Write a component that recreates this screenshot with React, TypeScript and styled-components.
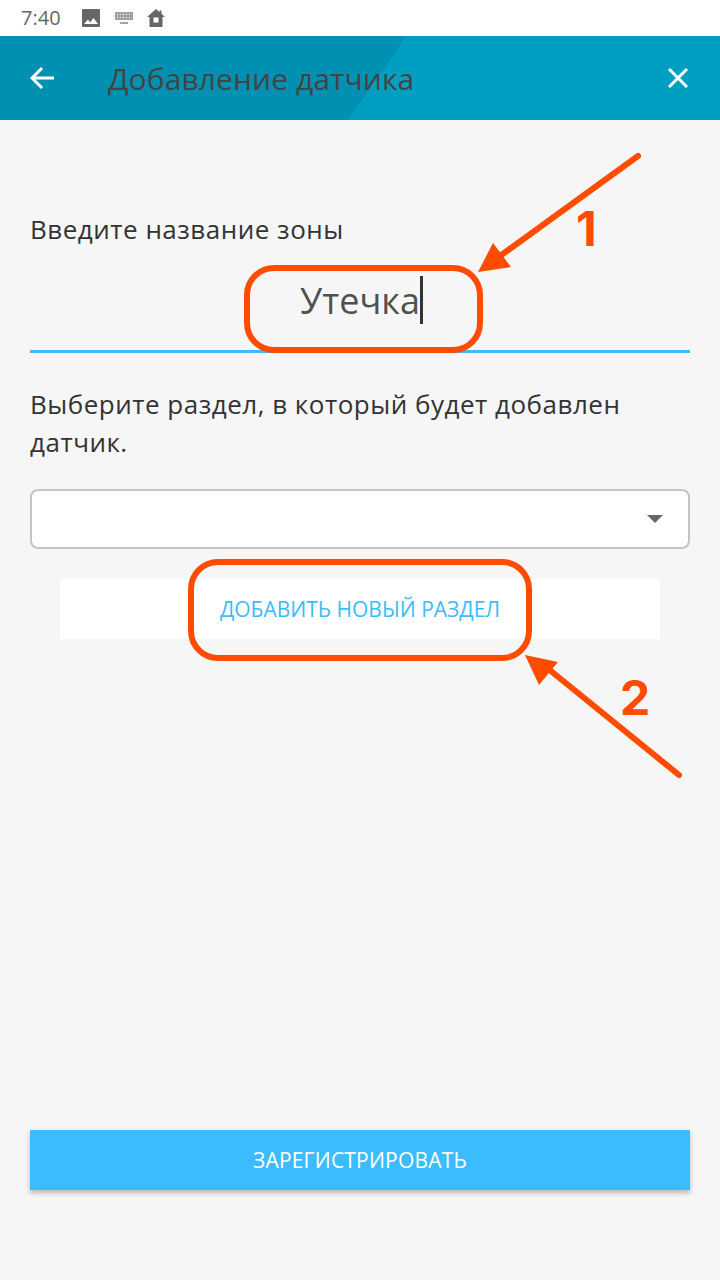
import * as React from "react";
import styled, { createGlobalStyle } from "styled-components";

const GlobalStyle = createGlobalStyle`
  html, body {
    margin: 0;
    padding: 0;
    background: #f6f6f6;
    font-family: "Open Sans", "Noto Sans", sans-serif;
  }
  * { box-sizing: border-box; }
`;

const Accent = "#3bbcff";
const Marker = "#ff4c00";

const Screen = styled.div`
  position: relative;
  width: 720px;
  height: 1280px;
  display: flex;
  flex-direction: column;
  overflow: hidden;
  background: #f6f6f6;
`;

const StatusBar = styled.div`
  height: 36px;
  background: #fff;
  display: flex;
  align-items: center;
  padding-left: 21px;
  color: #666;
`;

const Clock = styled.span`
  font-size: 20px;
  line-height: 36px;
  width: 60px;
`;

const StatusIcon = styled.svg`
  display: block;
  margin-right: 13px;
  fill: #666;
`;

const Header = styled.header`
  height: 84px;
  background: linear-gradient(124.6deg, #0091b2 0, #0091b2 334px, #009fc2 335px);
  display: flex;
  align-items: center;
  padding: 0 32px 0 30px;
`;

const HeaderIcon = styled.svg`
  display: block;
  stroke: #fff;
  stroke-width: 3;
  fill: none;
`;

const Title = styled.h1`
  flex: 1;
  margin: 0 0 0 54px;
  font-size: 30px;
  font-weight: 400;
  letter-spacing: 0.1px;
  color: #444;
  white-space: nowrap;
`;

const Content = styled.main`
  flex: 1;
  padding: 90px 30px 90px;
  display: flex;
  flex-direction: column;
`;

const Label = styled.p`
  margin: 0;
  font-size: 26px;
  line-height: 38px;
  letter-spacing: 0.5px;
  color: #333;
`;

const Field = styled.div`
  height: 87px;
  margin-top: 18px;
  padding-left: 3px;
  border-bottom: 3px solid ${Accent};
  display: flex;
  justify-content: center;
  font-size: 36px;
  line-height: 70px;
  color: #505050;
`;

const Caret = styled.span`
  width: 3px;
  height: 48px;
  margin-top: 10px;
  background: #333;
`;

const SectionLabel = styled(Label)`
  margin-top: 32px;
`;

const Select = styled.div`
  height: 60px;
  margin-top: 28px;
  background: #fff;
  border: 2px solid #c4c4c4;
  border-radius: 8px;
  display: flex;
  align-items: center;
  justify-content: flex-end;
  padding-right: 25px;
`;

const SelectArrow = styled.span`
  width: 0;
  height: 0;
  border-left: 8px solid transparent;
  border-right: 8px solid transparent;
  border-top: 8px solid #666;
`;

const AddButton = styled.div`
  height: 60px;
  margin: 30px 30px 0;
  background: #fff;
  color: ${Accent};
  font-size: 21px;
  display: flex;
  align-items: center;
  justify-content: center;
`;

const SubmitButton = styled.div`
  height: 60px;
  margin-top: auto;
  background: ${Accent};
  color: #fff;
  font-size: 21px;
  letter-spacing: 0.2px;
  display: flex;
  align-items: center;
  justify-content: center;
  box-shadow: 0 3px 5px rgba(0, 0, 0, 0.25);
`;

const Callout = styled.div<{ $x: number; $y: number; $w: number; $h: number }>`
  position: absolute;
  left: ${(p) => p.$x}px;
  top: ${(p) => p.$y}px;
  width: ${(p) => p.$w}px;
  height: ${(p) => p.$h}px;
  border: 6px solid ${Marker};
  border-radius: 30px;
`;

const Arrows = styled.svg`
  position: absolute;
  left: 0;
  top: 0;
`;

const StepNumber = styled.span<{ $x: number; $y: number }>`
  position: absolute;
  left: ${(p) => p.$x}px;
  top: ${(p) => p.$y}px;
  font-family: Inter, "Open Sans", sans-serif;
  font-weight: 700;
  font-size: 48px;
  line-height: 50px;
  color: ${Marker};
`;

export default function App() {
  return (
    <Screen>
      <GlobalStyle />
      <StatusBar>
        <Clock>7:40</Clock>
        <StatusIcon width="20" height="20" viewBox="0 0 20 20">
          <path d="M2 1h16a1 1 0 0 1 1 1v16a1 1 0 0 1-1 1H2a1 1 0 0 1-1-1V2a1 1 0 0 1 1-1zm1 15h14l-4.500-6-3.500 4.500L7 11.500z" fillRule="evenodd" />
        </StatusIcon>
        <StatusIcon width="20" height="14" viewBox="0 0 20 14" style={{ opacity: 0.6 }}>
          <path d="M1 1h18v8H1zM6 11h8v2H6z" />
          <path d="M3 3h1v1H3zM6 3h1v1H6zM9 3h1v1H9zM12 3h1v1h-1zM15 3h1v1h-1zM3 6h1v1H3zM6 6h1v1H6zM9 6h1v1H9zM12 6h1v1h-1zM15 6h1v1h-1z" fill="#fff" />
        </StatusIcon>
        <StatusIcon width="18" height="18" viewBox="0 0 18 18">
          <path d="M9 0l3.500 3V1.500h2v3.300L18 8h-2.500v10h-13V8H0zM6.500 8.500v5h5v-5z" fillRule="evenodd" />
        </StatusIcon>
      </StatusBar>
      <Header>
        <HeaderIcon width="24" height="24" viewBox="0 0 24 24">
          <path d="M24 12H2M12 2L2 12l10 10" />
        </HeaderIcon>
        <Title>Добавление датчика</Title>
        <HeaderIcon width="20" height="20" viewBox="0 0 20 20">
          <path d="M1 1l18 18M19 1L1 19" />
        </HeaderIcon>
      </Header>
      <Content>
        <Label>Введите название зоны</Label>
        <Field>
          Утечка
          <Caret />
        </Field>
        <SectionLabel>Выберите раздел, в который будет добавлен датчик.</SectionLabel>
        <Select>
          <SelectArrow />
        </Select>
        <AddButton>ДОБАВИТЬ НОВЫЙ РАЗДЕЛ</AddButton>
        <SubmitButton>ЗАРЕГИСТРИРОВАТЬ</SubmitButton>
      </Content>

      <Callout $x={244} $y={265} $w={239} $h={88} />
      <Callout $x={188} $y={559} $w={344} $h={102} />
      <Arrows width="720" height="1280" viewBox="0 0 720 1280">
        <g stroke={Marker} strokeWidth="6" strokeLinecap="round" fill="none">
          <path d="M638 156L500 256" />
          <path d="M679 775L546 667" />
        </g>
        <g fill={Marker}>
          <path d="M478 272L493 243L511 267z" />
          <path d="M525 655L558 662L539 685z" />
        </g>
      </Arrows>
      <StepNumber $x={576} $y={204}>1</StepNumber>
      <StepNumber $x={620} $y={673}>2</StepNumber>
    </Screen>
  );
}
